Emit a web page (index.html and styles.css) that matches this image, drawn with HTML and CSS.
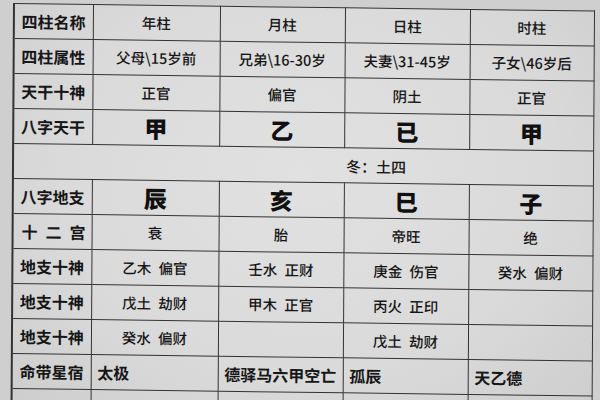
FILE: index.html
```html
<!DOCTYPE html>
<html lang="zh-CN">
<head>
<meta charset="utf-8">
<title>四柱</title>
<link rel="stylesheet" href="styles.css">
</head>
<body>
<div class="sheet">
<table class="bazi">
  <colgroup>
    <col class="c-label"><col class="c-a"><col class="c-b"><col class="c-c"><col class="c-d">
  </colgroup>
  <tr>
    <th>四柱名称</th><td>年柱</td><td>月柱</td><td>日柱</td><td>时柱</td>
  </tr>
  <tr>
    <th>四柱属性</th><td>父母\15岁前</td><td>兄弟\16-30岁</td><td>夫妻\31-45岁</td><td>子女\46岁后</td>
  </tr>
  <tr>
    <th>天干十神</th><td>正官</td><td>偏官</td><td>阴土</td><td>正官</td>
  </tr>
  <tr class="big">
    <th>八字天干</th><td>甲</td><td>乙</td><td>已</td><td>甲</td>
  </tr>
  <tr class="season">
    <td colspan="5"><span>冬：土四</span></td>
  </tr>
  <tr class="big">
    <th>八字地支</th><td>辰</td><td>亥</td><td>巳</td><td>子</td>
  </tr>
  <tr>
    <th class="spaced">十二宫</th><td>衰</td><td>胎</td><td>帝旺</td><td>绝</td>
  </tr>
  <tr>
    <th>地支十神</th><td>乙木&ensp;偏官</td><td>壬水&ensp;正财</td><td>庚金&ensp;伤官</td><td>癸水&ensp;偏财</td>
  </tr>
  <tr>
    <th>地支十神</th><td>戊土&ensp;劫财</td><td>甲木&ensp;正官</td><td>丙火&ensp;正印</td><td></td>
  </tr>
  <tr>
    <th>地支十神</th><td>癸水&ensp;偏财</td><td></td><td>戊土&ensp;劫财</td><td></td>
  </tr>
  <tr class="stars">
    <th>命带星宿</th><td>太极</td><td>德驿马六甲空亡</td><td>孤辰</td><td>天乙德</td>
  </tr>
  <tr>
    <th></th><td></td><td></td><td></td><td></td>
  </tr>
</table>
</div>
</body>
</html>
```
FILE: styles.css
```css
html, body {
  margin: 0;
  padding: 0;
  width: 600px;
  height: 400px;
  overflow: hidden;
  background: #cfcfcf;
}

.sheet {
  padding: 3px 0 0 13px;
}

.bazi {
  border-collapse: collapse;
  table-layout: fixed;
  width: 580px;
  font-family: "Noto Sans CJK SC", "Noto Sans", sans-serif;
  color: #161616;
  background: radial-gradient(ellipse 70% 80% at 50% 40%, #e1e1e1 0%, #dadada 60%, #cdcdcd 100%);
  transform: skew(-0.35deg, 0.75deg);
  transform-origin: 0 0;
}

.c-label { width: 79px; }
.c-a { width: 127px; }
.c-b { width: 125px; }
.c-c { width: 125px; }
.c-d { width: 124px; }

.bazi th,
.bazi td {
  height: 34px;
  padding: 0;
  border: 1.5px solid #333333;
  text-align: center;
  vertical-align: middle;
  white-space: nowrap;
  line-height: 1;
}

.bazi th {
  font-size: 16px;
  font-weight: 700;
  border-left-width: 2px;
}

.bazi td {
  font-size: 14.5px;
  font-weight: 500;
}

.bazi th.spaced {
  letter-spacing: 8px;
  text-indent: 8px;
}

.big td {
  font-size: 23px;
  font-weight: 900;
  color: #101010;
}

.season td {
  text-align: left;
  padding-left: 332px;
  font-size: 15px;
  border-left-width: 2px;
}

.stars td {
  text-align: left;
  padding-left: 6px;
  font-size: 16px;
  font-weight: 700;
}
```
